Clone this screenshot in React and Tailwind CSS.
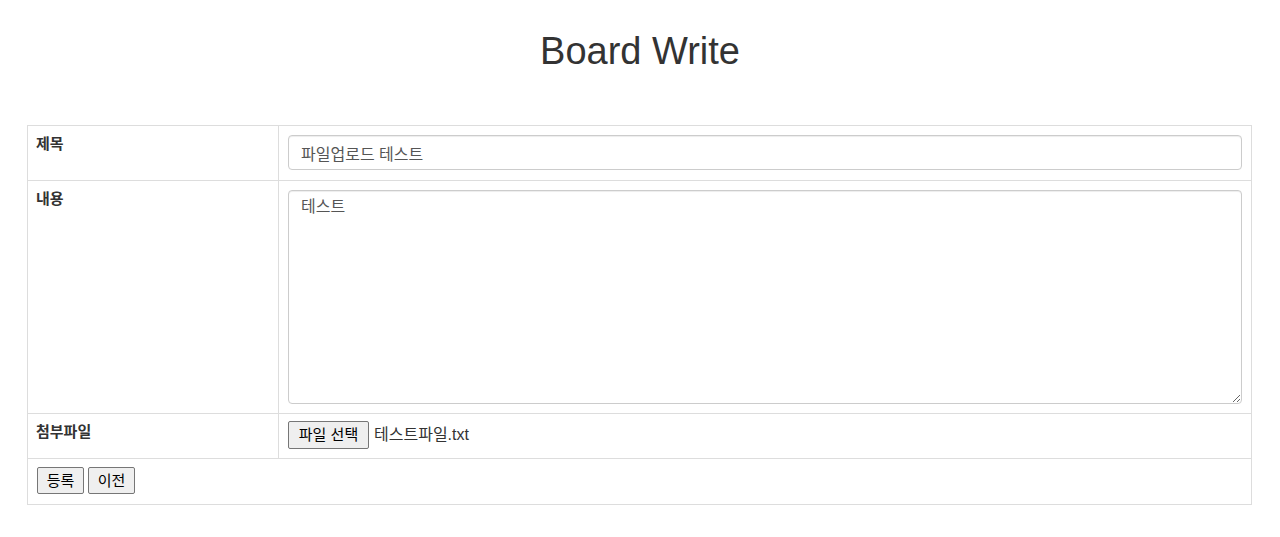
export default function App() {
  const font = { fontFamily: '"Liberation Sans", "Noto Sans CJK KR", sans-serif' };
  return (
    <div className="min-h-[537px] bg-white text-[#333]" style={font}>
      <h1 className="pt-[30px] text-center text-[38px] leading-[42px] font-normal text-[#333]">Board Write</h1>
      <div className="ml-[27px] mt-[53px] w-[1225px] border border-[#ddd]">
        <div className="flex h-[55px] border-b border-[#ddd]">
          <div className="w-[251px] shrink-0 border-r border-[#ddd] px-[8px] pt-[8px] text-[15px] font-bold leading-[20px]">제목</div>
          <div className="flex-1 px-[9px] pt-[9px]">
            <input
              className="block h-[35px] w-full rounded-[4px] border border-[#ccc] px-[12px] text-[16px] text-[#555] shadow-[inset_0_1px_1px_rgba(0,0,0,0.075)] outline-none"
              defaultValue="파일업로드 테스트"
              style={font}
            />
          </div>
        </div>
        <div className="flex h-[233px] border-b border-[#ddd]">
          <div className="w-[251px] shrink-0 border-r border-[#ddd] px-[8px] pt-[8px] text-[15px] font-bold leading-[20px]">내용</div>
          <div className="flex-1 px-[9px] pt-[9px]">
            <textarea
              className="block h-[214px] w-full rounded-[4px] border border-[#ccc] px-[12px] pt-[6px] text-[16px] leading-[20px] text-[#555] shadow-[inset_0_1px_1px_rgba(0,0,0,0.075)] outline-none"
              defaultValue="테스트"
              style={font}
            />
          </div>
        </div>
        <div className="flex h-[45px] border-b border-[#ddd]">
          <div className="w-[251px] shrink-0 border-r border-[#ddd] px-[8px] pt-[8px] text-[15px] font-bold leading-[20px]">첨부파일</div>
          <div className="flex flex-1 items-start px-[9px] pt-[7px]">
            <button
              type="button"
              className="h-[28px] w-[81px] rounded-[2px] border border-[#767676] bg-[#efefef] text-[15px] font-normal leading-[20px] text-black"
              style={font}
            >
              파일 선택
            </button>
            <span className="ml-[5px] mt-[3px] text-[16px] leading-[22px] text-[#333]">테스트파일.txt</span>
          </div>
        </div>
        <div className="flex h-[45px] gap-[4px] pl-[9px] pt-[8px]">
          <button
            type="button"
            className="h-[27px] w-[47px] rounded-[2px] border border-[#767676] bg-[#efefef] text-[15px] font-normal leading-[20px] text-black"
            style={font}
          >
            등록
          </button>
          <button
            type="button"
            className="h-[27px] w-[47px] rounded-[2px] border border-[#767676] bg-[#efefef] text-[15px] font-normal leading-[20px] text-black"
            style={font}
          >
            이전
          </button>
        </div>
      </div>
    </div>
  );
}
